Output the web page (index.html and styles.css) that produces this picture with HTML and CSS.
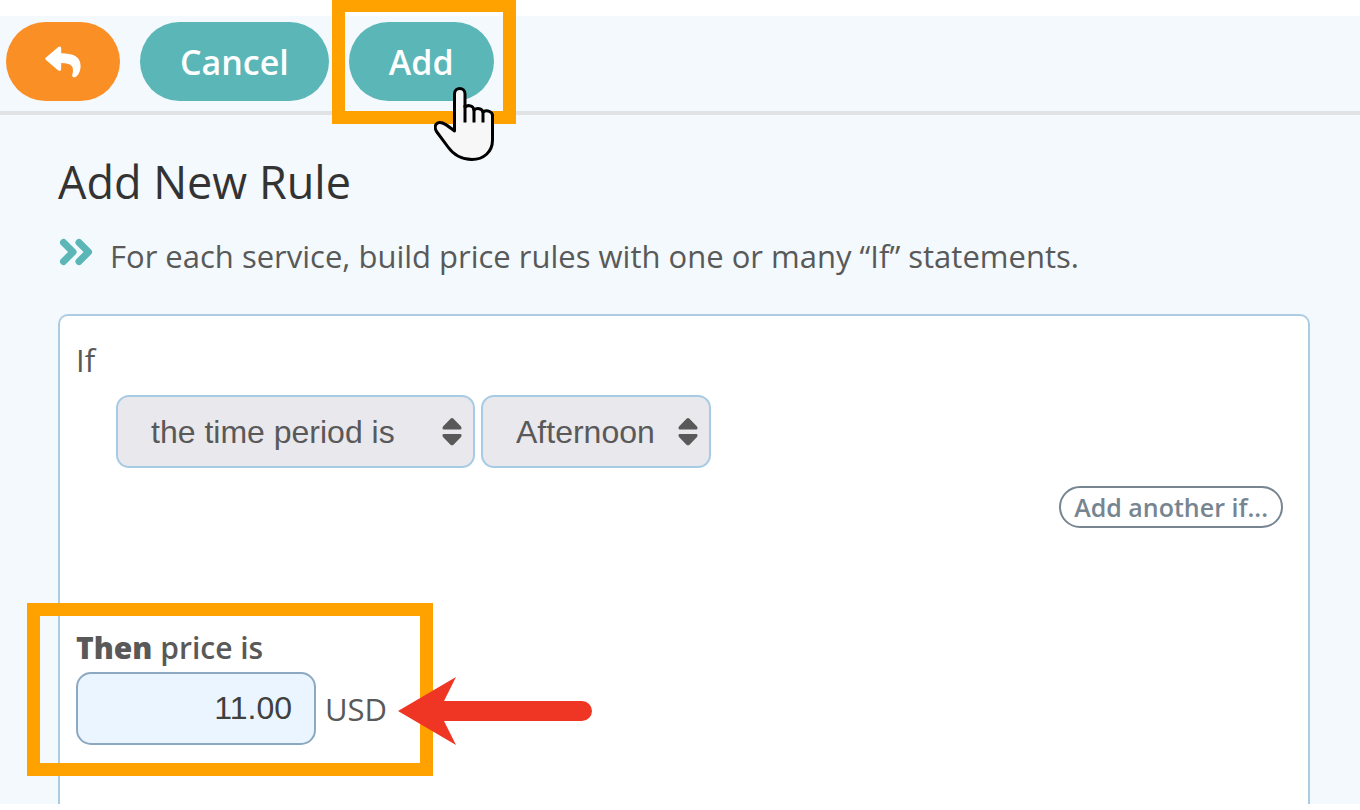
FILE: index.html
```html
<!DOCTYPE html>
<html lang="en">
<head>
<meta charset="utf-8">
<meta name="viewport" content="width=device-width, initial-scale=1">
<title>Add New Rule</title>
<link rel="stylesheet" href="styles.css">
</head>
<body>
<div class="page">
  <header class="toolbar">
    <button class="btn btn-back" type="button" aria-label="Back">
      <svg class="back-icon" viewBox="0 0 36 32" aria-hidden="true"><path d="M1 11.500 L13 1.200 Q16.200 -.8 16.200 2.500 V7.300 C28 7.300 35.600 10.500 35.600 20 C35.600 25 33.500 29 31 30.800 C29 32 26.800 31 27.300 28.800 C29.500 20 26.500 17.200 16.200 17 V22.500 Q16.200 26.200 13 24.200 L1 13.900 Q-.3 12.700 1 11.500 Z"/></svg>
    </button>
    <button class="btn" type="button">Cancel</button>
    <div class="highlighted">
      <button class="btn" type="button">Add</button>
      <span class="frame frame-add"></span>
      <svg class="pointer" viewBox="0 0 60 74" aria-hidden="true">
        <path d="M20.500 44 V7 C20.500 -.2 31 -.2 31 7 V20 C34 17.500 39.500 18.500 40 23 C43 20.500 48 21.500 49 25 C53 22.500 58.500 24.500 58.500 28.500 V53 C58.500 65 49.500 72.500 38 72.500 C27 72.500 19 67 14 60 L2.500 44.500 C-1 38 3.500 34 8.500 36 C13.500 38 17 41.500 20.500 44 Z"/>
        <path d="M31 18 V35.500 M40 22 V35.500 M49 24 V35.500"/>
      </svg>
    </div>
  </header>
  <main class="content">
    <h1 class="title">Add New Rule</h1>
    <p class="intro">
      <svg class="chevrons" viewBox="0 0 34 28" aria-hidden="true"><path d="M4.500 4.500 L14 14 L4.500 23.500 M20 4.500 L29.500 14 L20 23.500"/></svg>
      <span>For each service, build price rules with one or many “If” statements.</span>
    </p>
    <form class="panel">
      <div class="if-label">If</div>
      <div class="conditions">
        <div class="picker">
          <select class="picker-select picker-wide" aria-label="Condition"><option>the time period is</option></select>
          <svg class="picker-arrows" viewBox="0 0 20 28" aria-hidden="true"><path d="M8.500 .8 Q10 -.6 11.500 .8 L19 8.500 Q20.500 11.500 18 11.500 H2 Q-.5 11.500 1 8.500 Z M2 16 H18 Q20.500 16 19 19 L11.500 26.700 Q10 28 8.500 26.700 L1 19 Q-.5 16 2 16 Z"/></svg>
        </div>
        <div class="picker">
          <select class="picker-select" aria-label="Time period"><option>Afternoon</option></select>
          <svg class="picker-arrows" viewBox="0 0 20 28" aria-hidden="true"><path d="M8.500 .8 Q10 -.6 11.500 .8 L19 8.500 Q20.500 11.500 18 11.500 H2 Q-.5 11.500 1 8.500 Z M2 16 H18 Q20.500 16 19 19 L11.500 26.700 Q10 28 8.500 26.700 L1 19 Q-.5 16 2 16 Z"/></svg>
        </div>
      </div>
      <div class="more"><button class="btn-outline" type="button">Add another if...</button></div>
      <div class="result">
        <label class="price-label" for="price"><strong>Then</strong> price is</label>
        <div class="price-row">
          <input class="price-input" id="price" type="text" value="11.00">
          <span>USD</span>
        </div>
        <span class="frame frame-price"></span>
        <svg class="arrow" viewBox="0 0 194 68" aria-hidden="true"><path d="M0 34 L58 0 L46 24 H184 A10 10 0 0 1 184 44 H46 L58 68 Z"/></svg>
      </div>
    </form>
  </main>
</div>
</body>
</html>
```
FILE: styles.css
```css
* {
  box-sizing: border-box;
}

body {
  margin: 0;
  background: #fff;
  color: #595959;
  font-family: "Open Sans", "Noto Sans", sans-serif;
  font-size: 31px;
  line-height: 44px;
}

.page {
  margin-top: 16px;
  background: #f3f9fc;
}

.toolbar {
  display: flex;
  gap: 20px;
  padding: 6px 6px 10px;
  border-bottom: 4px solid #e1e2e3;
}

.btn {
  display: flex;
  align-items: center;
  justify-content: center;
  height: 79px;
  padding: 0 40px;
  border: 0;
  border-radius: 40px;
  background: #5ab6b7;
  color: #fff;
  font: 600 34px/48px "Open Sans", "Noto Sans", sans-serif;
}

.btn-back {
  width: 114px;
  padding: 0;
  background: #fa8f26;
}

.back-icon {
  width: 36px;
  height: 32px;
  fill: #fff;
}

.highlighted,
.result {
  position: relative;
}

.frame {
  position: absolute;
  border: 13px solid #ffa200;
  pointer-events: none;
}

.frame-add {
  inset: -23px -22px -23px -17px;
}

.pointer {
  position: absolute;
  top: 65px;
  left: 85px;
  width: 60px;
  height: 74px;
  fill: #f7f7f7;
  stroke: #000;
  stroke-width: 3;
  stroke-linejoin: round;
}

.content {
  padding: 37px 50px 0 58px;
}

.title {
  margin: 0;
  color: #333;
  font-size: 45px;
  font-weight: 400;
  line-height: 60px;
}

.intro {
  display: flex;
  align-items: center;
  gap: 17px;
  margin: 22px 0 36px;
}

.chevrons {
  width: 34px;
  height: 28px;
  margin: 0 0 8px 1px;
  fill: none;
  stroke: #5ab6b7;
  stroke-width: 7;
  stroke-linecap: round;
  stroke-linejoin: round;
}

.panel {
  padding: 22px 25px 59px 16px;
  border: 2px solid #accce4;
  border-bottom: 0;
  border-radius: 10px 10px 0 0;
  background: #fff;
}

.conditions {
  display: flex;
  gap: 6px;
  margin: 13px 0 18px 40px;
}

.picker {
  position: relative;
}

.picker-select {
  width: 230px;
  height: 73px;
  padding: 0 33px;
  border: 2px solid #a8cbe5;
  border-radius: 13px;
  appearance: none;
  background: #e9e8ec;
  color: #595959;
  font: 32px/40px "Liberation Sans", Arial, sans-serif;
}

.picker-wide {
  width: 359px;
}

.picker-arrows {
  position: absolute;
  top: 23px;
  right: 13px;
  width: 20px;
  height: 28px;
  fill: #595959;
  pointer-events: none;
}

.more {
  display: flex;
  justify-content: flex-end;
}

.btn-outline {
  padding: 1px 13px;
  border: 2px solid #778591;
  border-radius: 21px;
  background: #fff;
  color: #778591;
  font: 600 25px/36px "Open Sans", "Noto Sans", sans-serif;
}

.result {
  margin-top: 100px;
}

.price-label {
  display: block;
  margin-bottom: 4px;
  font-size: 30px;
  font-weight: 600;
  line-height: 40px;
}

.price-label strong {
  font-weight: 800;
}

.price-row {
  display: flex;
  align-items: center;
  gap: 9px;
}

.price-input {
  width: 240px;
  height: 73px;
  padding: 0 22px;
  border: 2px solid #8ca9c1;
  border-radius: 15px;
  background: #eaf5ff;
  color: #404040;
  font: 32px/40px "Liberation Sans", Arial, sans-serif;
  text-align: right;
}

.frame-price {
  top: -25px;
  left: -49px;
  width: 406px;
  height: 173px;
}

.arrow {
  position: absolute;
  top: 49px;
  left: 322px;
  width: 194px;
  height: 68px;
  fill: #ef3524;
}
```
